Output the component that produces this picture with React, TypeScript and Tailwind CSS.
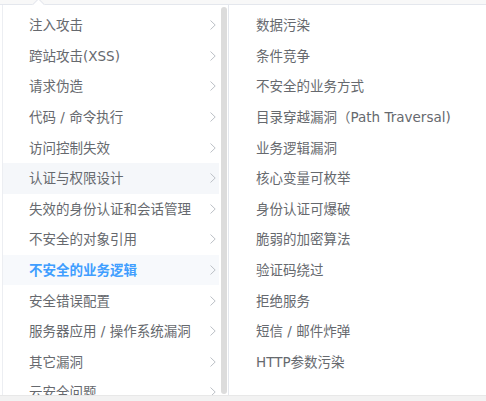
import React from 'react';

const leftItems = [
  '注入攻击',
  '跨站攻击(XSS)',
  '请求伪造',
  '代码 / 命令执行',
  '访问控制失效',
  '认证与权限设计',
  '失效的身份认证和会话管理',
  '不安全的对象引用',
  '不安全的业务逻辑',
  '安全错误配置',
  '服务器应用 / 操作系统漏洞',
  '其它漏洞',
  '云安全问题',
];

const rightItems = [
  '数据污染',
  '条件竞争',
  '不安全的业务方式',
  '目录穿越漏洞（Path Traversal)',
  '业务逻辑漏洞',
  '核心变量可枚举',
  '身份认证可爆破',
  '脆弱的加密算法',
  '验证码绕过',
  '拒绝服务',
  '短信 / 邮件炸弹',
  'HTTP参数污染',
];

const Chevron: React.FC = () => (
  <svg width="6" height="10" viewBox="0 0 6 10" className="shrink-0">
    <polyline points="0.5,0.5 5.2,5 0.5,9.5" fill="none" stroke="#bcc0c6" strokeWidth="1" />
  </svg>
);

export default function App() {
  const hovered = '认证与权限设计';
  const active = '不安全的业务逻辑';

  return (
    <div
      className="relative w-[486px] h-[401px] overflow-hidden bg-white text-[13.5px] text-[#66696e]"
      style={{ fontFamily: '"DejaVu Sans", "Noto Sans CJK SC", sans-serif' }}
    >
      {/* top strip */}
      <div className="h-[5px] bg-[#f8f8f8] border-b border-[#e4e7ed]" />
      {/* popper arrow */}
      <div className="absolute left-[34px] top-[0px] w-[9px] h-[9px] bg-white border-l border-t border-[#e4e7ed] rotate-45" />

      <div className="flex h-[390px] border-l border-[#eceef2] ml-[2px]">
        {/* left menu */}
        <div className="w-[226px] flex shrink-0 border-r border-[#e4e7ed]">
          <div className="w-[217px] pt-[5px] overflow-hidden">
            {leftItems.map((item) => (
              <div
                key={item}
                className={`h-[30.6px] flex items-center justify-between pl-[26px] pr-[3px] ${
                  item === hovered ? 'bg-[#f5f7fa]' : item === active ? 'bg-[#f7f9fc]' : ''
                }`}
              >
                <span className={`whitespace-nowrap ${item === active ? 'text-[#409eff] font-bold' : ''}`}>{item}</span>
                <Chevron />
              </div>
            ))}
          </div>
          <div className="w-[9px] pt-[2px] pb-[1px] pl-[2px]">
            <div className="w-[6px] h-full rounded-[3px] bg-[#dcdcdc]" />
          </div>
        </div>

        {/* right menu */}
        <div className="flex-1 pt-[5px]">
          {rightItems.map((item) => (
            <div key={item} className="h-[30.6px] flex items-center pl-[27px]">
              <span className="whitespace-nowrap">{item}</span>
            </div>
          ))}
        </div>
      </div>

      {/* bottom strip */}
      <div className="h-[6px] bg-[#f2f2f2] border-t border-[#e8e8e8]" />
    </div>
  );
}
